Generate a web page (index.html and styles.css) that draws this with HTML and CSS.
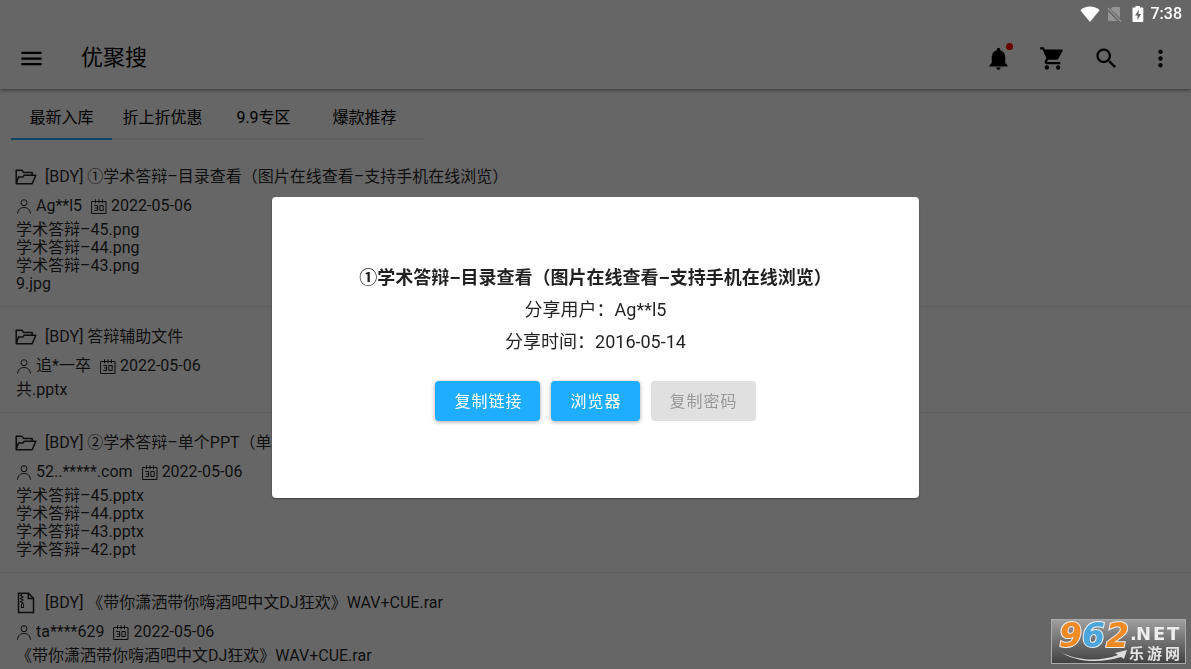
FILE: index.html
```html
<!DOCTYPE html>
<html lang="zh-CN">
<head>
<meta charset="utf-8">
<meta name="viewport" content="width=device-width, initial-scale=1">
<title>优聚搜</title>
<link rel="stylesheet" href="styles.css">
</head>
<body>
<svg class="sprite" aria-hidden="true">
  <symbol id="folder" viewBox="0 0 22 16"><path d="M1.200 14.800V1.200h5.600l1.800 2.200h8.600v3M1.200 14.800h16l3.600-8.600H9.200L7.800 8H3.400L1.200 14.800z" fill="none" stroke="currentColor" stroke-width="1.500" stroke-linejoin="round"/></symbol>
  <symbol id="user" viewBox="0 0 14 15"><circle cx="7" cy="3.700" r="3"/><path d="M.6 14.500c.3-4 2.700-6 6.400-6s6.100 2 6.400 6"/></symbol>
  <symbol id="calendar" viewBox="0 0 16 15"><path d="M.6 2.500h14.400v12H.6zM4.500 .3v4M8 .3v4M11.500 .3v4M3.300 6.500h3.400v5H3.300M4 9h2.700M8.900 6.500h3.300v5H8.900z"/></symbol>
  <symbol id="archive" viewBox="0 0 18 22"><path d="M1.500 1.200h10l5 5v14.300h-15zM11.300 1.500v5h5" fill="none" stroke="currentColor" stroke-width="1.500"/><path d="M5 2l-1.500 1.500L6 5 3.500 6.500 6 8 3.500 9.500 6 11l-1.500 1v3.500h2V12" fill="none" stroke="currentColor" stroke-width="1.100"/></symbol>
</svg>

<div class="page">
  <header class="toolbar">
    <button class="icon-btn" aria-label="菜单"><svg class="icon" viewBox="0 0 24 24"><path d="M3 18h18v-2H3v2zm0-5h18v-2H3v2zm0-7v2h18V6H3z"/></svg></button>
    <h1 class="brand">优聚搜</h1>
    <button class="icon-btn" aria-label="通知"><svg class="icon" viewBox="0 0 24 24"><path d="M12 22c1.100 0 2-.9 2-2h-4c0 1.100.9 2 2 2zm6-6v-5c0-3.070-1.640-5.640-4.500-6.320V4c0-.83-.67-1.500-1.500-1.500s-1.500.67-1.500 1.500v.68C7.630 5.360 6 7.920 6 11v5l-2 2v1h16v-1l-2-2z"/></svg><span class="dot"></span></button>
    <button class="icon-btn" aria-label="购物车"><svg class="icon" viewBox="0 0 24 24"><path d="M7 18c-1.100 0-1.990.9-1.990 2S5.900 22 7 22s2-.9 2-2-.9-2-2-2zM1 2v2h2l3.600 7.590-1.350 2.450c-.16.28-.25.61-.25.96 0 1.100.9 2 2 2h12v-2H7.420c-.14 0-.25-.11-.25-.25l.03-.12.9-1.630h7.450c.75 0 1.410-.41 1.750-1.030l3.580-6.490c.08-.14.12-.31.12-.48 0-.55-.45-1-1-1H5.210l-.94-2H1zm16 16c-1.100 0-1.990.9-1.990 2s.89 2 1.990 2 2-.9 2-2-.9-2-2-2z"/></svg></button>
    <button class="icon-btn" aria-label="搜索"><svg class="icon" viewBox="0 0 24 24"><path d="M15.500 14h-.79l-.28-.27C15.410 12.590 16 11.110 16 9.500 16 5.910 13.090 3 9.500 3S3 5.910 3 9.500 5.910 16 9.500 16c1.610 0 3.090-.59 4.230-1.570l.27.28v.79l5 4.990L20.490 19l-4.990-5zm-6 0C7.010 14 5 11.990 5 9.500S7.010 5 9.500 5 14 7.010 14 9.500 11.990 14 9.500 14z"/></svg></button>
    <button class="icon-btn" aria-label="更多"><svg class="icon" viewBox="0 0 24 24"><path d="M12 8c1.100 0 2-.9 2-2s-.9-2-2-2-2 .9-2 2 .9 2 2 2zm0 2c-1.100 0-2 .9-2 2s.9 2 2 2 2-.9 2-2-.9-2-2-2zm0 6c-1.100 0-2 .9-2 2s.9 2 2 2 2-.9 2-2-.9-2-2-2z"/></svg></button>
  </header>

  <nav class="tabs">
    <button class="tab active">最新入库</button>
    <button class="tab">折上折优惠</button>
    <button class="tab">9.9专区</button>
    <button class="tab">爆款推荐</button>
  </nav>

  <main>
    <article class="card">
      <h2 class="card-title"><svg class="type"><use href="#folder"/></svg>[BDY] ①学术答辩–目录查看（图片在线查看–支持手机在线浏览）</h2>
      <p class="meta"><svg class="user"><use href="#user"/></svg><span class="name">Ag**l5</span><svg class="cal"><use href="#calendar"/></svg><span>2022-05-06</span></p>
      <ul class="files"><li>学术答辩–45.png</li><li>学术答辩–44.png</li><li>学术答辩–43.png</li><li>9.jpg</li></ul>
    </article>
    <article class="card">
      <h2 class="card-title"><svg class="type"><use href="#folder"/></svg>[BDY] 答辩辅助文件</h2>
      <p class="meta"><svg class="user"><use href="#user"/></svg><span class="name">追*一卒</span><svg class="cal"><use href="#calendar"/></svg><span>2022-05-06</span></p>
      <ul class="files"><li>共.pptx</li></ul>
    </article>
    <article class="card">
      <h2 class="card-title"><svg class="type"><use href="#folder"/></svg>[BDY] ②学术答辩–单个PPT（单个）</h2>
      <p class="meta"><svg class="user"><use href="#user"/></svg><span class="name">52..*****.com</span><svg class="cal"><use href="#calendar"/></svg><span>2022-05-06</span></p>
      <ul class="files"><li>学术答辩–45.pptx</li><li>学术答辩–44.pptx</li><li>学术答辩–43.pptx</li><li>学术答辩–42.ppt</li></ul>
    </article>
    <article class="card">
      <h2 class="card-title"><svg class="type archive"><use href="#archive"/></svg>[BDY] 《带你潇洒带你嗨酒吧中文DJ狂欢》WAV+CUE.rar</h2>
      <p class="meta"><svg class="user"><use href="#user"/></svg><span class="name">ta****629</span><svg class="cal"><use href="#calendar"/></svg><span>2022-05-06</span></p>
      <ul class="files"><li>《带你潇洒带你嗨酒吧中文DJ狂欢》WAV+CUE.rar</li></ul>
    </article>
  </main>
</div>

<div class="overlay">
  <section class="dialog" role="dialog" aria-modal="true" aria-labelledby="dialog-title">
    <h2 class="dialog-title" id="dialog-title">①学术答辩–目录查看（图片在线查看–支持手机在线浏览）</h2>
    <p>分享用户：Ag**l5</p>
    <p>分享时间：2016-05-14</p>
    <div class="actions">
      <button class="btn">复制链接</button>
      <button class="btn">浏览器</button>
      <button class="btn" disabled>复制密码</button>
    </div>
  </section>
</div>

<div class="status">
  <svg width="20" height="16" viewBox="0 0 20 16"><path d="M10 16L.4 4.200C3 1.800 6.300.6 10 .6s7 1.200 9.600 3.600z" fill="#fff"/></svg>
  <svg class="sim" width="15" height="16" viewBox="0 0 15 16"><path d="M5.500 1H12a1 1 0 0 1 1 1v10L3.600 2.900zM1 5.300L10.500 15H2a1 1 0 0 1-1-1z" fill="#949494"/><path d="M.8 1.800L14 15.500" stroke="#949494" stroke-width="1.200"/></svg>
  <svg class="battery" width="12" height="18" viewBox="0 0 12 18"><path d="M3.500 1h4.500v1.500h2.500a.8.8 0 0 1 .8.8v13a.8.8 0 0 1-.8.8H1.300a.8.8 0 0 1-.8-.8v-13a.8.8 0 0 1 .8-.8h2.200z" fill="#fff"/><path d="M7 4.500L3 10.500h2.500V15L9 9H6.500z" fill="#666"/></svg>
  <span>7:38</span>
</div>

<svg class="watermark" viewBox="0 0 135 45" role="img" aria-label="962.NET 乐游网">
  <defs><linearGradient id="plate" x1="0" y1="0" x2="0" y2="1"><stop offset="0" stop-color="#a0a0a0"/><stop offset=".5" stop-color="#707070"/><stop offset="1" stop-color="#414141"/></linearGradient></defs>
  <rect x=".5" y=".5" width="134" height="44" fill="url(#plate)" stroke="#aaa"/>
  <path d="M8 32c17 10 40 11 59 4l-3-2 12-3-3 9-3-2c-23 7-46 5-62-6z" fill="#ddd"/>
  <g class="digits"><text x="8" y="28" fill="#f08a24">9</text><text x="31" y="28" fill="#4ba6dd">6</text><text x="55" y="28" fill="#f08a24">2</text></g>
  <text class="net" x="79 85 102 116" y="21">.NET</text>
  <text class="cn" x="78 96 114" y="40">乐游网</text>
</svg>
</body>
</html>
```
FILE: styles.css
```css
* { box-sizing: border-box; }

body {
  margin: 0;
  height: 100vh;
  overflow: hidden;
  background: #fff;
  color: rgba(0, 0, 0, .87);
  font: 16px/18px Roboto, "Noto Sans CJK SC", sans-serif;
}

h1, h2, p, ul { margin: 0; padding: 0; font-weight: 400; }
ul { list-style: none; }
button { border: 0; padding: 0; background: none; font: inherit; color: inherit; }
.sprite { position: absolute; width: 0; height: 0; }

/* App bar */
.toolbar {
  display: flex;
  align-items: center;
  height: 89px;
  padding: 27px 4px 0;
  color: #000;
  box-shadow: 0 1px 4px rgba(0, 0, 0, .5);
}
.brand { flex: 1; padding-left: 23px; font-size: 22px; line-height: 32px; }
.icon-btn {
  position: relative;
  display: flex;
  align-items: center;
  justify-content: center;
  width: 54px;
  height: 54px;
}
.icon { width: 27px; height: 27px; fill: currentColor; }
.dot {
  position: absolute;
  top: 12px;
  right: 12px;
  width: 7px;
  height: 7px;
  border-radius: 50%;
  background: #f00;
}

/* Tabs */
.tabs {
  display: flex;
  width: fit-content;
  margin: 0 11px 7px;
  padding-right: 9px;
  box-shadow: inset 0 -2px #e8e8e8;
}
.tab { width: 101px; height: 51px; padding: 8px 0 0; border-bottom: 2px solid transparent; color: #000; }
.active { border-color: #1eb0fc; }

/* Result list */
.card { padding: 16px 15px 13px; border-bottom: 1px solid #e8e8e8; }
.card-title, .meta { display: flex; align-items: center; font-size: 16px; white-space: nowrap; }
.card-title { height: 28px; }
.type { width: 22px; height: 16px; margin-right: 8px; }
.archive { height: 22px; }
.meta { height: 30px; }
.meta svg { fill: none; stroke: currentColor; stroke-width: 1; }
.user { width: 14px; height: 15px; margin: 0 5px 0 2px; }
.name { margin-right: 9px; }
.cal { width: 16px; height: 15px; margin-right: 4px; }
.files { padding-left: 1px; }

/* Dialog */
.overlay {
  position: fixed;
  inset: 0;
  display: flex;
  align-items: center;
  justify-content: center;
  padding-top: 26px;
  background: rgba(0, 0, 0, .6);
}
.dialog {
  padding: 65px 87px 77px;
  border-radius: 4px;
  background: #fff;
  box-shadow: 0 1px 2px rgba(0, 0, 0, .4);
  font-size: 18px;
  line-height: 32px;
  text-align: center;
}
.dialog-title { font-size: 18px; font-weight: 700; }
.actions { display: flex; justify-content: center; gap: 11px; margin-top: 23px; }
.btn {
  height: 40px;
  padding: 1px 18px 0 19px;
  border-radius: 4px;
  background: #1eadff;
  box-shadow: 0 1px 4px rgba(0, 0, 0, .35);
  color: #fff;
  font-size: 16px;
  letter-spacing: 1px;
}
.btn:disabled { background: #e0e0e0; box-shadow: none; color: #979797; }

/* System bar */
.status {
  position: fixed;
  top: 0;
  right: 9px;
  display: flex;
  align-items: center;
  height: 27px;
  color: #fff;
  font-weight: 500;
}
.sim { margin: 0 10px 0 7px; }
.battery { margin-right: 7px; }

.watermark {
  position: fixed;
  right: 5px;
  bottom: 5px;
  width: 135px;
  height: 45px;
  overflow: visible;
}
.digits { font: italic 700 33px "DejaVu Sans", sans-serif; stroke: #eee; stroke-width: 2px; paint-order: stroke; }
.net { font: 700 18px "DejaVu Sans", sans-serif; fill: #eee; }
.cn { font: 700 15px "Noto Sans CJK SC", sans-serif; fill: #e4e4e4; }
```
